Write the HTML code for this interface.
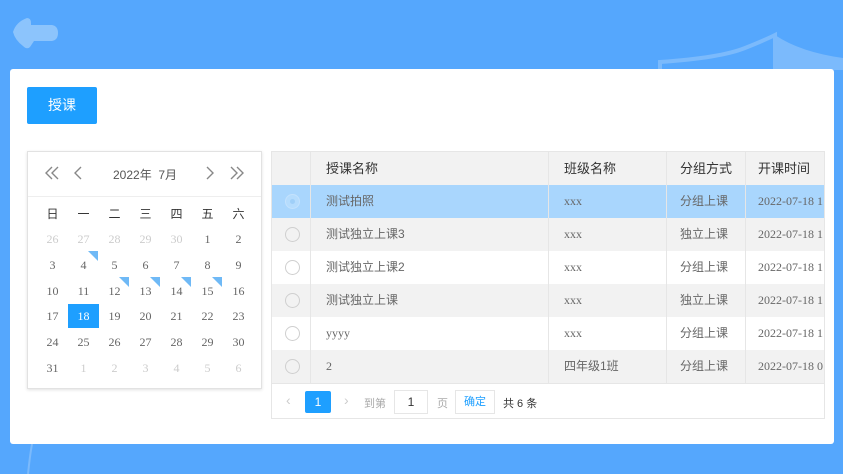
<!DOCTYPE html>
<html><head><meta charset="utf-8"><style>
*{margin:0;padding:0;box-sizing:border-box}
body{width:843px;height:474px;background:#55a7fd;position:relative;overflow:hidden;font-family:"Liberation Sans","Noto Sans CJK SC",sans-serif;color:#666}
.a{position:absolute}
.card{left:10px;top:69px;width:824px;height:375px;background:#fff;border-radius:3px}
.btn{left:27px;top:87px;width:70px;height:37px;background:#1e9fff;color:#fff;font-size:14px;line-height:37px;text-align:center;border-radius:2px}
.cal{left:27px;top:151px;width:235px;height:238px;border:1px solid #e2e2e2;box-shadow:0 1px 3px rgba(0,0,0,.12);background:#fff}
.ch{position:absolute;left:0;top:0;width:233px;height:45px;border-bottom:1px solid #eee;font-size:12px;color:#555}
.d{position:absolute;width:31px;text-align:center;font-family:"Liberation Serif","Noto Sans CJK SC",serif;font-size:12px;color:#666;height:24px;line-height:24px}
.wk{font-family:"Liberation Sans","Noto Sans CJK SC",sans-serif;font-size:12px;color:#333}
.g{color:#ccc}
.sel{background:#1e9fff;color:#fff}
.mk::after{content:"";position:absolute;right:1px;top:-2px;border-style:solid;border-width:0 10px 10px 0;border-color:transparent #6fb9f6 transparent transparent}
.tb{left:271px;top:151px;width:554px;height:268px;border:1px solid #e6e6e6;background:#fff}
.r{position:absolute;left:0;width:552px;height:33px;font-size:12px;line-height:33px}
.r span{position:absolute;top:0;height:33px;border-right:1px solid #e6e6e6;padding-left:15px;white-space:nowrap;overflow:hidden}
.c0{left:0;width:39px}.c1{left:39px;width:238px}.c2{left:277px;width:118px}.c3{left:395px;width:79px;padding-left:13px!important}.c4{left:474px;width:78px;padding-left:12px!important;border-right:none!important}
.s{font-family:"Liberation Serif","Noto Sans CJK SC",serif}
.rad{position:absolute;left:13px;top:9px;width:15px;height:15px;border:1px solid #cfcfcf;border-radius:50%;background:#fff}
</style></head><body>
<svg class="a" style="left:0;top:0" width="843" height="474">
<path d="M13 32 Q16 22 27 18 Q31 18 31 23 L31 25 H52 Q58 26 58 33 Q58 40 52 41 H34 L30 47 Q27 50 23 46 Q15 40 13 32 Z" fill="#8cc4fc"/>
<path d="M660 70 V62 Q720 58 745 48 Q765 40 775 35 L775 70" fill="none" stroke="#7bbafc" stroke-width="4"/>
<path d="M775 35 Q800 52 843 58 V70 H775 Z" fill="#7bbafc"/>
<path d="M28 474 Q30 455 32 444" stroke="#7bbafc" stroke-width="2" fill="none"/>
</svg>
<div class="a card"></div>
<div class="a btn">授课</div>
<div class="a cal">
 <div class="ch">
  <svg class="a" style="left:0;top:0" width="233" height="45" fill="none" stroke="#888" stroke-width="1.4">
   <path d="M24 15 L18 21 L24 27 M30 15 L24 21 L30 27"/>
   <path d="M53 15 L47 21 L53 27"/>
   <path d="M179 15 L185 21 L179 27"/>
   <path d="M203 15 L209 21 L203 27 M209 15 L215 21 L209 27"/>
  </svg>
  <span class="a" style="left:85px;top:14px">2022年&nbsp;&nbsp;7月</span>
 </div>
 <div id="days"></div>
</div>
<div class="a tb">
 <div class="r" style="top:0;height:33px;background:#f2f2f2;color:#333;font-size:13px"><span class="c0"></span><span class="c1">授课名称</span><span class="c2">班级名称</span><span class="c3">分组方式</span><span class="c4">开课时间</span></div>
 <div class="r" style="top:33px;background:#a9d6fd"><span class="c0"><i class="rad" style="background:#b5dcfd;border-color:#c4e2fd"><i class="a" style="left:4px;top:4px;width:5px;height:5px;border-radius:50%;background:#9fcff8"></i></i></span><span class="c1">测试拍照</span><span class="c2 s">xxx</span><span class="c3">分组上课</span><span class="c4 s">2022-07-18 1</span></div>
 <div class="r" style="top:66px;background:#f2f2f2"><span class="c0"><i class="rad" style="background:#f2f2f2"></i></span><span class="c1">测试独立上课3</span><span class="c2 s">xxx</span><span class="c3">独立上课</span><span class="c4 s">2022-07-18 1</span></div>
 <div class="r" style="top:99px;background:#fff"><span class="c0"><i class="rad"></i></span><span class="c1">测试独立上课2</span><span class="c2 s">xxx</span><span class="c3">分组上课</span><span class="c4 s">2022-07-18 1</span></div>
 <div class="r" style="top:132px;background:#f2f2f2"><span class="c0"><i class="rad" style="background:#f2f2f2"></i></span><span class="c1">测试独立上课</span><span class="c2 s">xxx</span><span class="c3">独立上课</span><span class="c4 s">2022-07-18 1</span></div>
 <div class="r" style="top:165px;background:#fff"><span class="c0"><i class="rad"></i></span><span class="c1 s">yyyy</span><span class="c2 s">xxx</span><span class="c3">分组上课</span><span class="c4 s">2022-07-18 1</span></div>
 <div class="r" style="top:198px;background:#f2f2f2"><span class="c0"><i class="rad" style="background:#f2f2f2"></i></span><span class="c1 s">2</span><span class="c2">四年级1班</span><span class="c3">分组上课</span><span class="c4 s">2022-07-18 0</span></div>
 <div class="a" style="left:0;top:231px;width:552px;height:1px;background:#e6e6e6"></div>
 <span class="a" style="left:14px;top:240px;font-size:14px;color:#ccc">‹</span>
 <div class="a" style="left:33px;top:239px;width:26px;height:22px;background:#1e9fff;color:#fff;font-size:12px;text-align:center;line-height:22px;border-radius:2px" >1</div>
 <span class="a" style="left:72px;top:240px;font-size:14px;color:#ccc">›</span>
 <span class="a" style="left:92px;top:243px;font-size:11px;color:#aaa">到第</span>
 <div class="a" style="left:122px;top:238px;width:34px;height:24px;border:1px solid #e6e6e6;font-size:12px;text-align:center;line-height:22px;color:#333">1</div>
 <span class="a" style="left:165px;top:243px;font-size:11px;color:#aaa">页</span>
 <div class="a" style="left:183px;top:238px;width:40px;height:24px;border:1px solid #e6e6e6;font-size:11px;text-align:center;line-height:22px;color:#1e9fff">确定</div>
 <span class="a" style="left:231px;top:243px;font-size:11px;color:#333">共 6 条</span>
</div>
<script>
var h='',cx=[8,39,70,101,132,163,194],w=['日','一','二','三','四','五','六'];
for(var i=0;i<7;i++)h+='<div class="d wk" style="left:'+(cx[i]+1)+'px;top:50px">'+w[i]+'</div>';
var days=[26,27,28,29,30,1,2,3,4,5,6,7,8,9,10,11,12,13,14,15,16,17,18,19,20,21,22,23,24,25,26,27,28,29,30,31,1,2,3,4,5,6];
var mk=[8,16,17,18,19];
for(var k=0;k<42;k++){var r=Math.floor(k/7),c=k%7,cl='d';
if(k<5||k>35)cl+=' g';if(k==22)cl+=' sel';if(mk.indexOf(k)>=0)cl+=' mk';
h+='<div class="'+cl+'" style="left:'+(cx[c]+1)+'px;top:'+(75+r*25.8)+'px">'+days[k]+'</div>';}
document.getElementById('days').innerHTML=h;
</script>
</body></html>
